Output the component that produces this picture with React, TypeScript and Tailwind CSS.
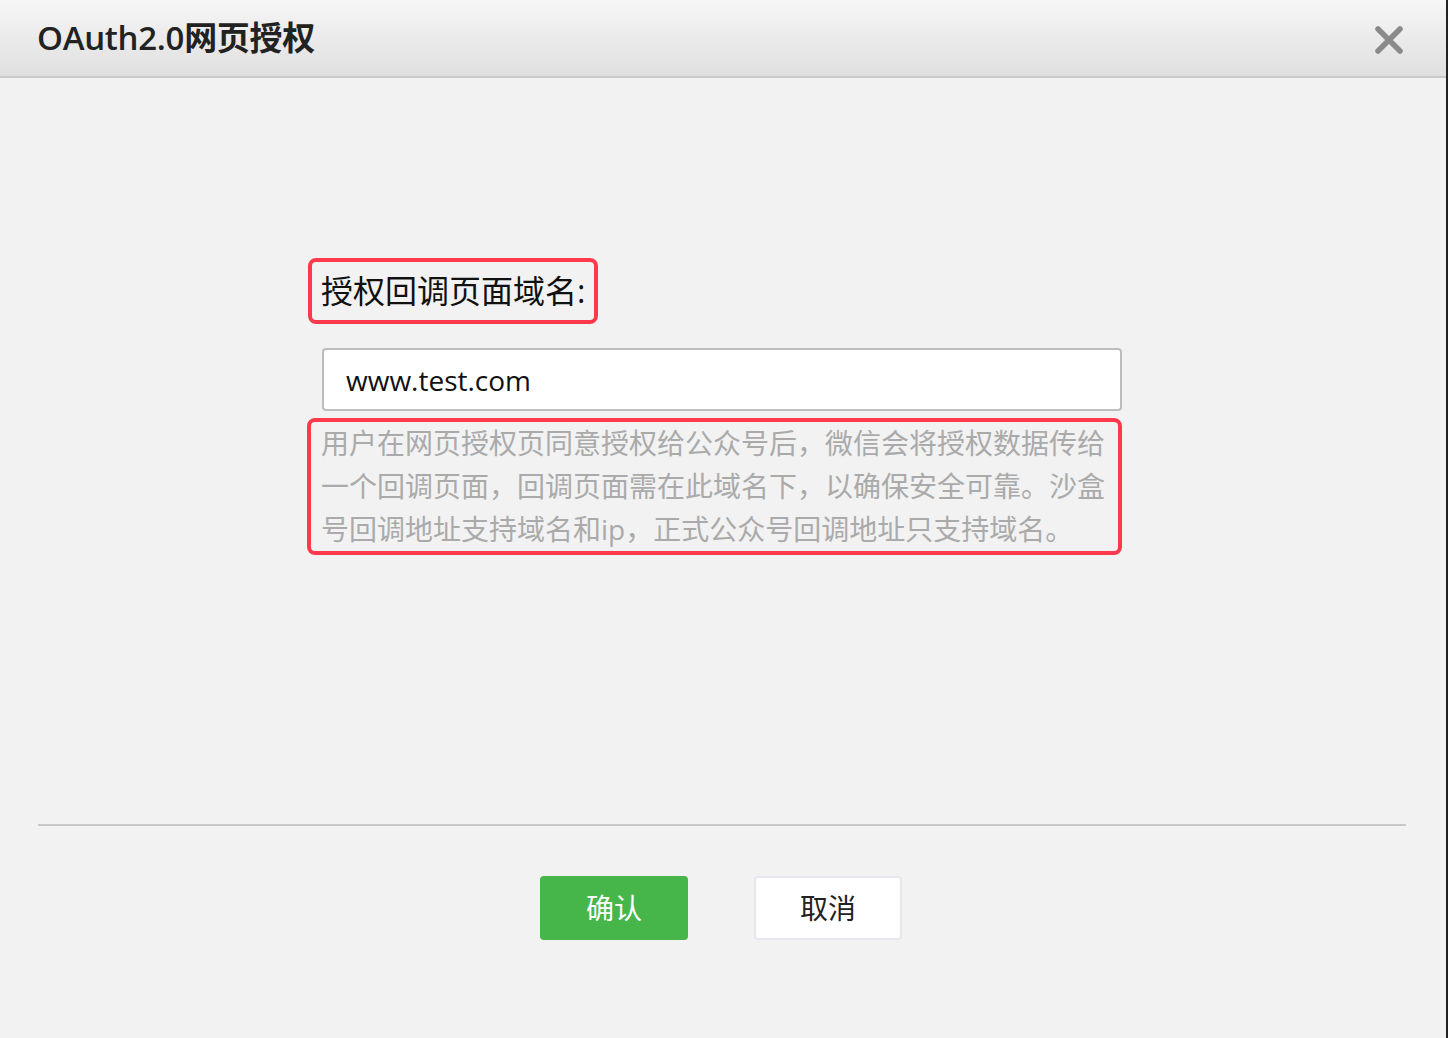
import React from "react";

const cjk = { fontFamily: '"Open Sans", "Noto Sans CJK SC", sans-serif' };

const hintLines = [
  "用户在网页授权页同意授权给公众号后，微信会将授权数据传给",
  "一个回调页面，回调页面需在此域名下，以确保安全可靠。沙盒",
  "号回调地址支持域名和ip，正式公众号回调地址只支持域名。",
];

function CloseIcon() {
  return (
    <svg width="30" height="30" viewBox="0 0 30 30" className="blur-[0.4px]">
      <path
        d="M4 4 L26 26 M26 4 L4 26"
        stroke="#8a8a8a"
        strokeWidth="5.5"
        strokeLinecap="round"
      />
    </svg>
  );
}

export default function App() {
  return (
    <div
      className="flex h-[1038px] w-[1448px] flex-col border-r-2 border-[#222] bg-[#f2f2f2]"
      style={cjk}
    >
      <header className="flex h-[78px] shrink-0 items-center justify-between border-b-2 border-[#c9c9c9] bg-gradient-to-b from-[#f6f6f6] to-[#e0e0e0] pl-[37px] pr-[42px]">
        <h1 className="mb-[2px] text-[33px] font-semibold leading-none tracking-[-0.3px] text-[#222]">
          OAuth2.0网页授权
        </h1>
        <div className="mt-[4px]">
          <CloseIcon />
        </div>
      </header>

      <main className="flex flex-1 flex-col pt-[180px]">
        <div className="ml-[308px] flex w-max items-center rounded-[8px] border-4 border-[#fd3a4c] py-[6px] pl-[9px] pr-[9px]">
          <span className="text-[32px] leading-[46px] text-[#111]">授权回调页面域名:</span>
        </div>

        <div className="ml-[322px] mt-[24px] flex h-[63px] w-[800px] items-center rounded-[4px] border-2 border-[#bdbdbd] bg-white pl-[22px]">
          <span className="text-[28px] text-[#111]">www.test.com</span>
        </div>

        <div className="ml-[307px] mt-[7px] w-[815px] rounded-[8px] border-4 border-[#fd3a4c] pl-[10px]">
          {hintLines.map((line) => (
            <div key={line} className="whitespace-nowrap text-[28px] leading-[43px] text-[#aaaaaa]">
              {line}
            </div>
          ))}
        </div>

        <div className="ml-[38px] mr-[40px] mt-[269px] h-[2px] bg-[#c8c8c8]" />

        <div className="mt-[50px] flex justify-center gap-[66px] pr-[4px]">
          <button className="flex h-[64px] w-[148px] items-center justify-center rounded-[4px] bg-[#46b64b] text-[28px] text-white">
            确认
          </button>
          <button className="flex h-[64px] w-[148px] items-center justify-center rounded-[4px] border-2 border-[#e6e6ee] bg-white text-[28px] text-[#222]">
            取消
          </button>
        </div>
      </main>
    </div>
  );
}
